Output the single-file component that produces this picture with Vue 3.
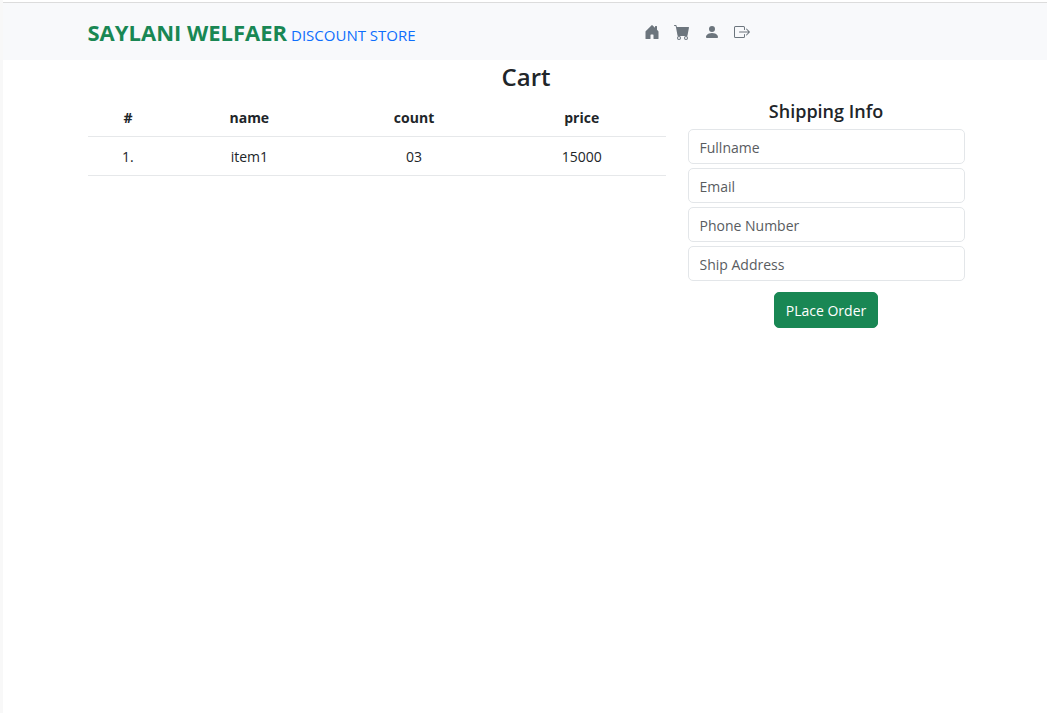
<script setup>
import { reactive } from 'vue'

const links = [
  {
    label: 'Home',
    d: 'M6.5 14.5v-3.505c0-.245.25-.495.5-.495h2c.25 0 .5.25.5.5v3.5a.5.5 0 0 0 .5.5h4a.5.5 0 0 0 .5-.5v-7a.5.5 0 0 0-.146-.354L13 5.793V2.5a.5.5 0 0 0-.5-.5h-1a.5.5 0 0 0-.5.5v1.293L8.354 1.146a.5.5 0 0 0-.708 0l-6 6A.5.5 0 0 0 1.5 7.5v7a.5.5 0 0 0 .5.5h4a.5.5 0 0 0 .5-.5'
  },
  {
    label: 'Cart',
    d: 'M0 1.5A.5.5 0 0 1 .5 1H2a.5.5 0 0 1 .485.379L2.89 3H14.5a.5.5 0 0 1 .491.592l-1.5 8A.5.5 0 0 1 13 12H4a.5.5 0 0 1-.491-.408L2.01 3.607 1.61 2H.5a.5.5 0 0 1-.5-.5M5 12a2 2 0 1 0 0 4 2 2 0 0 0 0-4m7 0a2 2 0 1 0 0 4 2 2 0 0 0 0-4m-7 1a1 1 0 1 1 0 2 1 1 0 0 1 0-2m7 0a1 1 0 1 1 0 2 1 1 0 0 1 0-2'
  },
  {
    label: 'Account',
    d: 'M3 14s-1 0-1-1 1-4 6-4 6 3 6 4-1 1-1 1zm5-6a3 3 0 1 0 0-6 3 3 0 0 0 0 6'
  },
  {
    label: 'Log out',
    d: 'M10 12.5a.5.5 0 0 1-.5.5h-8a.5.5 0 0 1-.5-.5v-9a.5.5 0 0 1 .5-.5h8a.5.5 0 0 1 .5.5v2a.5.5 0 0 0 1 0v-2A1.5 1.5 0 0 0 9.5 2h-8A1.5 1.5 0 0 0 0 3.5v9A1.5 1.5 0 0 0 1.5 14h8a1.5 1.5 0 0 0 1.5-1.5v-2a.5.5 0 0 0-1 0zM15.854 8.354a.5.5 0 0 0 0-.708l-3-3a.5.5 0 0 0-.708.708L14.293 7.5H5.5a.5.5 0 0 0 0 1h8.793l-2.147 2.146a.5.5 0 0 0 .708.708z'
  }
]

const items = [{ id: 1, name: 'item1', count: '03', price: '15000' }]

const fields = [
  { key: 'fullname', label: 'Fullname', type: 'text' },
  { key: 'email', label: 'Email', type: 'email' },
  { key: 'phone', label: 'Phone Number', type: 'tel' },
  { key: 'address', label: 'Ship Address', type: 'text' }
]

const order = reactive({ fullname: '', email: '', phone: '', address: '' })
</script>

<template>
  <div class="page">
    <header class="navbar">
      <div class="container bar">
        <a class="brand" href="#"><strong>SAYLANI WELFAER</strong> <span>DISCOUNT STORE</span></a>
        <nav class="links" aria-label="Main">
          <a v-for="link in links" :key="link.label" href="#" :aria-label="link.label">
            <svg viewBox="0 0 16 16" aria-hidden="true"><path :d="link.d" /></svg>
          </a>
        </nav>
      </div>
    </header>

    <main class="container">
      <h1>Cart</h1>
      <div class="columns">
        <table>
          <colgroup>
            <col class="col-num" />
            <col class="col-name" />
            <col />
            <col />
          </colgroup>
          <thead>
            <tr>
              <th scope="col">#</th>
              <th scope="col">name</th>
              <th scope="col">count</th>
              <th scope="col">price</th>
            </tr>
          </thead>
          <tbody>
            <tr v-for="item in items" :key="item.id">
              <td>{{ item.id }}.</td>
              <td>{{ item.name }}</td>
              <td>{{ item.count }}</td>
              <td>{{ item.price }}</td>
            </tr>
          </tbody>
        </table>

        <form @submit.prevent>
          <h2>Shipping Info</h2>
          <input
            v-for="field in fields"
            :key="field.key"
            v-model="order[field.key]"
            :type="field.type"
            :placeholder="field.label"
            :aria-label="field.label"
          />
          <button type="submit">PLace Order</button>
        </form>
      </div>
    </main>
  </div>
</template>

<style>
body {
  margin: 0;
  background: #fff;
}
</style>

<style scoped>
.page {
  box-sizing: border-box;
  min-height: 100vh;
  padding-top: 2px;
  border-left: 3px solid #f8f8f8;
  color: #212529;
  font-family: "Open Sans", "Noto Sans", sans-serif;
  font-size: 14px;
  line-height: 22px;
}

.container {
  box-sizing: border-box;
  width: 100%;
  max-width: 899px;
  margin: 0 auto;
  padding: 0 10px 0 12px;
}

.navbar {
  border-top: 1px solid #dcdcdc;
  background: #f8f9fb;
}

.bar {
  display: flex;
  align-items: center;
  min-height: 57px;
}

.brand {
  margin-right: 14px;
  padding-top: 4px;
  color: #0d6efd;
  font-size: 15px;
  line-height: 32px;
  text-decoration: none;
  white-space: nowrap;
}

.brand strong {
  color: #198754;
  font-size: 22px;
  font-weight: 700;
}

.links {
  display: flex;
  flex: 1;
  justify-content: center;
  gap: 14px;
}

.links a {
  display: flex;
  color: #6c757d;
}

.links svg {
  width: 16px;
  height: 16px;
  fill: currentColor;
}

h1,
h2 {
  margin: 0;
  font-weight: 600;
  text-align: center;
}

h1 {
  font-size: 24px;
  line-height: 34px;
  margin-bottom: 4px;
}

h2 {
  font-size: 18px;
  line-height: 26px;
  margin-bottom: 1px;
}

.columns {
  display: grid;
  grid-template-columns: minmax(0, 578fr) minmax(0, 277fr);
  gap: 22px;
  align-items: start;
}

table {
  width: 100%;
  border-collapse: collapse;
  table-layout: fixed;
  text-align: center;
}

.col-num {
  width: 14%;
}

.col-name {
  width: 28%;
}

th,
td {
  padding: 9px 8px 7px;
  border-bottom: 1px solid #e6e8ea;
}

th {
  font-weight: 700;
}

form {
  display: flex;
  flex-direction: column;
  gap: 4px;
}

input,
button {
  box-sizing: border-box;
  border-radius: 5px;
  font: inherit;
}

input {
  width: 100%;
  height: 35px;
  padding: 6px 11px 5px;
  border: 1px solid #e3e6e9;
  background: #fff;
  color: #212529;
}

input::placeholder {
  color: #595c5f;
  opacity: 1;
}

button {
  align-self: center;
  margin-top: 7px;
  padding: 7px 11px 5px;
  border: 1px solid #198754;
  background: #198754;
  color: #fff;
}
</style>
